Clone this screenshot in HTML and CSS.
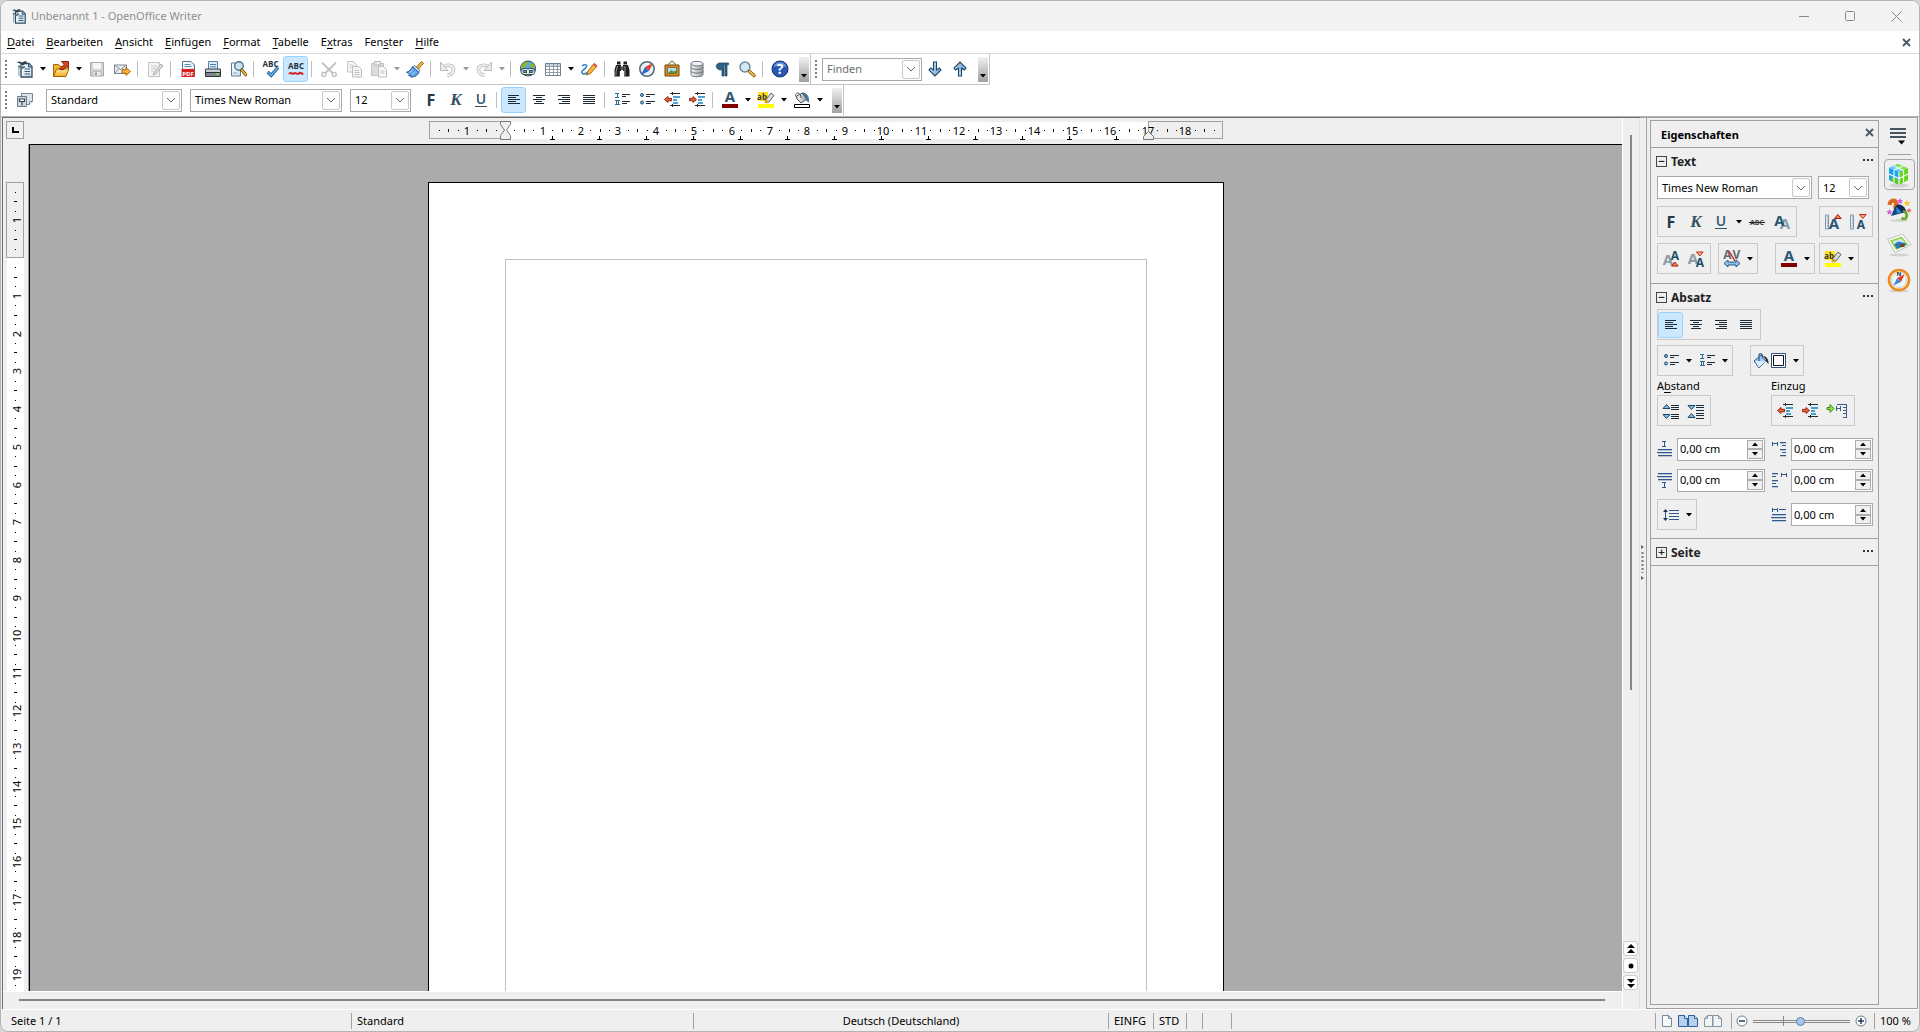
FILE: index.html
```html
<!DOCTYPE html>
<html lang="de">
<head>
<meta charset="utf-8">
<title>Unbenannt 1 - OpenOffice Writer</title>
<link rel="stylesheet" href="styles.css">
</head>
<body>
<svg class="defs" aria-hidden="true">
  <defs>
    <linearGradient id="g-blue" x1="0" y1="0" x2="1" y2="1"><stop offset="0" stop-color="#e4f2fd"/><stop offset="1" stop-color="#5f9fd6"/></linearGradient>
    <linearGradient id="g-grey" x1="0" y1="0" x2="1" y2="0"><stop offset="0" stop-color="#fafafa"/><stop offset="1" stop-color="#9a9a9a"/></linearGradient>
    <linearGradient id="g-gold" x1="0" y1="0" x2="0" y2="1"><stop offset="0" stop-color="#ffe9a0"/><stop offset="1" stop-color="#f5a81c"/></linearGradient>
    <linearGradient id="g-paper" x1="0" y1="0" x2="1" y2="1"><stop offset="0" stop-color="#fff"/><stop offset="1" stop-color="#cfdeea"/></linearGradient>
  </defs>
</svg>
<svg class="symbols" aria-hidden="true">
  <symbol id="i-writer" viewBox="0 0 18 18"><path d="M5 3.500h8l3 3v10.500H5z" fill="url(#g-paper)" stroke="#2c4c63" stroke-width="1.300"/><path d="M12.500 3.500v3.500H16" fill="#9ab4c6" stroke="#2c4c63"/><path d="M8.500 9h5.500M8.500 11.500h5.500M8.500 14h5.500" stroke="#2c5f86" stroke-width="1.200"/><path d="M1 2.500c2-1.500 4-1 5 .5 1.500-2 3.500-2 5.500-1C9.500 2.500 9 5 6.500 5.500 5.500 3.500 3 3 1 2.500z" fill="#2b3f4f"/><path d="M2 6.500c1.500-.5 3 0 3.500 1.200C6.500 6.300 8 6.200 9.300 7 8 7.300 7 8.800 5.500 8.800 4.800 7.400 3.500 6.800 2 6.500zM3 5v11" fill="#3d5668" stroke="#5b7688" stroke-width=".800"/></symbol>
  <symbol id="i-open" viewBox="0 0 18 18"><path d="M1.500 4.500h5l1.500 2h6v9.500h-12.500z" fill="#f6b62c" stroke="#a8660b"/><path d="M1.500 16.500L4.500 9h12.300l-2.800 7.500z" fill="url(#g-gold)" stroke="#a8660b"/><path d="M7.500 9l4.500-4.500-2.500-3h7v7l-2.200-2.200L11 10z" fill="#d8461b" stroke="#7e1d06" stroke-width=".900"/></symbol>
  <symbol id="i-save" viewBox="0 0 18 18"><path d="M2.500 2.500h13v13.500h-13z" fill="#d2d2d2" stroke="#a9a9a9"/><path d="M5 3h8v6H5z" fill="#f6f6f6"/><path d="M5 11.500h8v4.500H5z" fill="#ebebeb" stroke="#b4b4b4" stroke-width=".800"/><path d="M7 12.500h2v2.500H7z" fill="#999"/></symbol>
  <symbol id="i-mail" viewBox="0 0 18 18"><path d="M1.500 5h12v8.500h-12z" fill="#e9edf1" stroke="#7d868e"/><path d="M1.500 5l6 4.500 6-4.500M1.500 13.500l4.500-5M13.500 13l-4-4.500" fill="none" stroke="#7d868e" stroke-width=".900"/><path d="M9 9.800h4V7.500l4.500 4-4.500 4v-2.300H9z" fill="#ffb43a" stroke="#a45b06" stroke-width=".900"/></symbol>
  <symbol id="i-edit" viewBox="0 0 18 18"><path d="M2.500 2.500h11v14h-11z" fill="#f4f4f4" stroke="#c3c3c3"/><path d="M5 6h6M5 8.500h5M5 11h3" stroke="#ccc"/><path d="M8 12.500L15 4l2 1.800-7.300 8.200-2.500 1z" fill="#d7d7d7" stroke="#b0b0b0"/></symbol>
  <symbol id="i-pdf" viewBox="0 0 18 18"><path d="M3.500 1.500h8.500l3.500 3.500v11.500h-12z" fill="url(#g-paper)" stroke="#50748f"/><path d="M5.500 4.500h6M5.500 6.500h7" stroke="#5f8bab"/><path d="M2.500 9h13v8h-13z" fill="#d9201f"/><text x="9" y="15.500" text-anchor="middle" class="t-pdf">PDF</text></symbol>
  <symbol id="i-print" viewBox="0 0 18 18"><path d="M4.500 1.500h9v8h-9z" fill="#dcebf7" stroke="#5c7f9b"/><path d="M6 4.500h6M6 6.800h6" stroke="#4583b5"/><path d="M1.500 9h15v4.500h-15z" fill="#c8ced2" stroke="#3a4248"/><path d="M1.500 12.500h15v4h-15z" fill="#7d868c" stroke="#2b3237"/><path d="M12 14h3" stroke="#7fe037" stroke-width="1.500"/></symbol>
  <symbol id="i-preview" viewBox="0 0 18 18"><path d="M2.500 3h9v13h-9z" fill="url(#g-paper)" stroke="#5a7c94"/><path d="M4 13h4" stroke="#7ea4c0"/><circle cx="10" cy="6" r="4.300" fill="#c9e2f5" fill-opacity=".9" stroke="#50788f" stroke-width="1.400"/><path d="M12.800 10l4 4.800" stroke="#7a4a08" stroke-width="3.200" stroke-linecap="round"/><path d="M12.800 10l4 4.800" stroke="#f2b944" stroke-width="1.600" stroke-linecap="round"/></symbol>
  <symbol id="i-spell" viewBox="0 0 18 18"><text x="8.500" y="7" text-anchor="middle" class="t-abc">ABC</text><path d="M5.500 12l3.700 3.300L16 7.500" fill="none" stroke="#1e5f97" stroke-width="3.300"/><path d="M5.500 12l3.700 3.300L16 7.500" fill="none" stroke="#6cb5ec" stroke-width="1.500"/></symbol>
  <symbol id="i-autospell" viewBox="0 0 18 18"><text x="9" y="9" text-anchor="middle" class="t-abc">ABC</text><path d="M2 14c1.800-3 3.400 1 5-.5 1.600-2 3.200 2 4.800 0 1.600-2 3 1 4.600 0" fill="none" stroke="#d81e1e" stroke-width="2"/></symbol>
  <symbol id="i-cut" viewBox="0 0 18 18"><path d="M2 2.500l11 11M16 2.500L5 13.500" stroke="#c2c2c2" stroke-width="1.800"/><circle cx="3.800" cy="14.500" r="2" fill="none" stroke="#c4c4c4" stroke-width="1.500"/><circle cx="14.200" cy="14.500" r="2" fill="none" stroke="#c4c4c4" stroke-width="1.500"/></symbol>
  <symbol id="i-copy" viewBox="0 0 18 18"><path d="M2.500 1.500h6l3 3v7.500h-9z" fill="#f5f5f5" stroke="#c4c4c4"/><path d="M4.500 5h4M4.500 7.500h4" stroke="#ccc"/><path d="M7.500 6.500h6l3 3v7.500h-9z" fill="#f5f5f5" stroke="#bdbdbd"/><path d="M9.500 10.500h4.500M9.500 12.500h5M9.500 14.500h5" stroke="#c4c4c4"/></symbol>
  <symbol id="i-paste" viewBox="0 0 18 18"><path d="M1.500 3.500h12v12h-12z" fill="#dcdcdc" stroke="#c4c4c4"/><path d="M4.500 1.500h6v3.500h-6z" fill="#efefef" stroke="#b8b8b8"/><path d="M8.500 6.500h5l3 3v7.500h-8z" fill="#f8f8f8" stroke="#bdbdbd"/><path d="M10.500 11h4M10.500 13h4" stroke="#c8c8c8"/></symbol>
  <symbol id="i-brush" viewBox="0 0 18 18"><path d="M10.500 7L15.500 1.500l2 1.700L12.500 9z" fill="#f0bb3d" stroke="#8b5a0c" stroke-width=".900"/><path d="M8.500 5.500l5.500 5-1.500 2-5.500-5z" fill="#dfe4e8" stroke="#55656f" stroke-width=".800"/><path d="M6.500 6.500l6.500 6c-1.500 3.500-6 5-8.500 4.500l1-1.300-3-.2 1.300-1.500L.5 12.300c2.500-.8 4.500-2.800 6-5.800z" fill="#5b9fe6" stroke="#1d4f91" stroke-width=".900"/><path d="M7 9.500l-4 4M9.500 11.500l-4 3.500" stroke="#b8dcfa"/></symbol>
  <symbol id="i-undo" viewBox="0 0 18 18"><path d="M5 6.500c5-3 10-.5 9.500 4C14 13.500 11 15.500 8 15" fill="none" stroke="#bcbcbc" stroke-width="3.500"/><path d="M5 6.500c5-3 10-.5 9.500 4C14 13.500 11 15.500 8 15" fill="none" stroke="#f0f0f0" stroke-width="1.900"/><path d="M1.500 2v8.500H9z" fill="#eaeaea" stroke="#bcbcbc"/></symbol>
  <symbol id="i-redo" viewBox="0 0 18 18"><use href="#i-undo" transform="matrix(-1 0 0 1 18 0)"/></symbol>
  <symbol id="i-globe" viewBox="0 0 18 18"><circle cx="9" cy="8.500" r="7.500" fill="#5aa9e0" stroke="#254c66"/><path d="M2.500 5.500C5 1.500 7 1.500 9 2l-1 3-2.500 1.500L5 9 2 8zM11 2.500c3 .5 5 3 5 6l-3-1-2.500-2zM5 13l3-2 3 2-2 3z" fill="#93b52a"/><rect x="3" y="9.500" width="6.500" height="4" rx="2" fill="none" stroke="#26343c" stroke-width="2.600"/><rect x="8.500" y="9.500" width="6.500" height="4" rx="2" fill="none" stroke="#26343c" stroke-width="2.600"/><rect x="3" y="9.500" width="6.500" height="4" rx="2" fill="none" stroke="#e8eef0" stroke-width="1.200"/><rect x="8.500" y="9.500" width="6.500" height="4" rx="2" fill="none" stroke="#e8eef0" stroke-width="1.200"/></symbol>
  <symbol id="i-table" viewBox="0 0 18 18"><path d="M1.500 3.500h15v12h-15z" fill="#fff" stroke="#6d7f8d"/><path d="M2 4h14v2.500H2z" fill="#c8d5df"/><path d="M1.500 6.500h15M1.500 9.500h15M1.500 12.500h15M5.500 3.500v12M9.500 3.500v12M13.500 3.500v12" stroke="#8899a6" stroke-width=".900"/></symbol>
  <symbol id="i-draw" viewBox="0 0 18 18"><path d="M2 6c3-2.500 6-1 4 1.500-2 2.500-6 3.500-3.500 6 1.500 1 3.500 0 5-1" fill="none" stroke="#3585c6" stroke-width="1.600"/><path d="M8 11l6-7.500 3 2.500-6.500 7.500-4 1.500z" fill="#f6b93b" stroke="#8d5b0d" stroke-width=".900"/><path d="M13 4.700l1.200-1.700 3.200 2.500-1.400 1.700z" fill="#dc5045"/></symbol>
  <symbol id="i-binoc" viewBox="0 0 18 18"><path d="M4 1.500h3.500v3H4zM10.500 1.500H14v3h-3.500zM3 5h5v6H6.800v5.500H1.500V10zM15 5h-5v6h1.200v5.500h5.300V10z" fill="#1e1e1e"/><path d="M7.500 6.500h3V10h-3z" fill="#555"/><path d="M4.500 6L3 12v3.500M12 6v9.500" stroke="#9a9a9a"/></symbol>
  <symbol id="i-compass" viewBox="0 0 18 18"><circle cx="9" cy="9" r="7.200" fill="#e7f1f9" stroke="#586d7a" stroke-width="1.600"/><path d="M15 3l-4 8-4-4z" fill="#e3402b"/><path d="M3 15l8-4-4-4z" fill="#2a66c4"/></symbol>
  <symbol id="i-gallery" viewBox="0 0 18 18"><path d="M5 4.500L9 1l4 3.500" fill="none" stroke="#7b5015"/><path d="M2 5h14v11H2z" fill="#d98e25" stroke="#6f420b"/><path d="M4.500 7.500h9v6h-9z" fill="#aee0fb" stroke="#6f420b" stroke-width=".700"/><path d="M5 13l3.500-3 2 1.500 3-1V13z" fill="#4c9a2a"/></symbol>
  <symbol id="i-db" viewBox="0 0 18 18"><path d="M3 3.500v11c0 3 12 3 12 0v-11z" fill="url(#g-grey)" stroke="#6b7680"/><ellipse cx="9" cy="3.700" rx="6" ry="2.300" fill="#eef2f5" stroke="#6b7680"/><path d="M3 7.300c0 2.800 12 2.800 12 0M3 11c0 2.800 12 2.800 12 0" fill="none" stroke="#6b7680"/></symbol>
  <symbol id="i-para" viewBox="0 0 18 18"><path d="M15.500 3v1.800h-1.500V16h-2V4.800h-1V16H9v-6C1.800 10.500 1.800 3 7 3z" fill="#2f6488" stroke="#1b3e58" stroke-width=".700"/></symbol>
  <symbol id="i-zoom" viewBox="0 0 18 18"><circle cx="7" cy="7" r="5" fill="#d2e8f8" stroke="#71899a" stroke-width="1.500"/><path d="M11.500 11.500l4.500 4" stroke="#7a4a08" stroke-width="3.200" stroke-linecap="round"/><path d="M11.500 11.500l4.500 4" stroke="#f7c145" stroke-width="1.800" stroke-linecap="round"/></symbol>
  <symbol id="i-help" viewBox="0 0 18 18"><circle cx="9" cy="9" r="8" fill="#2857b8" stroke="#1a3470"/><path d="M2.500 7a6.800 6.800 0 0 1 13 0c-4-2-9-2-13 0z" fill="#6d98e0"/><text x="9" y="14" text-anchor="middle" class="t-help">?</text></symbol>
  <symbol id="i-down" viewBox="0 0 18 18"><path d="M7.500 2h3v8l3-2 1.500 2L9 16 3 10l1.500-2 3 2z" fill="url(#g-blue)" stroke="#1c4565" stroke-width="1.100"/></symbol>
  <symbol id="i-up" viewBox="0 0 18 18"><use href="#i-down" transform="matrix(1 0 0 -1 0 18)"/></symbol>
  <symbol id="i-styles" viewBox="0 0 18 18"><path d="M5.500 2.500h11v8l-3 3h-8z" fill="#dbe5ec" stroke="#75899a"/><path d="M16.500 10.500h-3v3" fill="#fff" stroke="#75899a"/><path d="M1.500 5.500h9v10h-9z" fill="#cfd8df" stroke="#6c7f8e"/><path d="M3.500 8h5v2.500h-5zM6 10.500v4" fill="#fff" stroke="#33444f" stroke-width="1.200"/></symbol>
  <symbol id="i-bold" viewBox="0 0 18 18"><text x="9" y="15" text-anchor="middle" class="t-bold">F</text></symbol>
  <symbol id="i-italic" viewBox="0 0 18 18"><text x="9" y="14" text-anchor="middle" class="t-italic">K</text></symbol>
  <symbol id="i-underline" viewBox="0 0 18 18"><text x="9" y="13" text-anchor="middle" class="t-under">U</text><path d="M3 15.500h12" stroke="#33546b"/></symbol>
  <symbol id="i-left" viewBox="0 0 18 18"><path d="M3 4.500h11M3 6.500h8M3 8.500h12M3 10.500h8M3 12.500h12" stroke="#1d2b36" shape-rendering="crispEdges"/></symbol>
  <symbol id="i-center" viewBox="0 0 18 18"><path d="M3 4.500h12M6 6.500h6M3 8.500h12M6 10.500h6M4 12.500h10" stroke="#1d2b36" shape-rendering="crispEdges"/></symbol>
  <symbol id="i-right" viewBox="0 0 18 18"><path d="M3 4.500h12M7 6.500h8M3 8.500h12M7 10.500h8M4 12.500h11" stroke="#1d2b36" shape-rendering="crispEdges"/></symbol>
  <symbol id="i-just" viewBox="0 0 18 18"><path d="M3 4.500h12M3 6.500h12M3 8.500h12M3 10.500h12M3 12.500h12" stroke="#1d2b36" shape-rendering="crispEdges"/></symbol>
  <symbol id="i-num" viewBox="0 0 18 18"><path d="M2 2.500h4M4 2v5M2 6.500h4M2 9.500h5M3 9v5M5 9v5M2 13.500h5" stroke="#2e6c95" shape-rendering="crispEdges"/><path d="M9 3.500h8M9 5.500h4M9 10.500h8M9 12.500h5" stroke="#1d2b36" shape-rendering="crispEdges"/></symbol>
  <symbol id="i-bul" viewBox="0 0 18 18"><circle cx="4" cy="4" r="1.500" fill="#8fc3e8" stroke="#1b4a6c"/><circle cx="4" cy="11.500" r="1.500" fill="#8fc3e8" stroke="#1b4a6c"/><path d="M8 3.500h9M8 5.500h4M8 10.500h9M8 12.500h5" stroke="#1d2b36" shape-rendering="crispEdges"/></symbol>
  <symbol id="i-outdent" viewBox="0 0 18 18"><path d="M7 2.500h2M10 2.500h7M7 14.500h2M10 14.500h7M9.500 1v3M9.500 13v3" stroke="#1d2b36" shape-rendering="crispEdges"/><path d="M10 6h7M10 9h4M10 12h5" stroke="#1583c8" stroke-width="1.600"/><path d="M1.500 8.500l3.500-3v1.800h3.500v2.500H5v1.700z" fill="#e8643a" stroke="#8c1c08" stroke-width=".900"/></symbol>
  <symbol id="i-indent" viewBox="0 0 18 18"><path d="M7 2.500h2M10 2.500h7M7 14.500h2M10 14.500h7M9.500 1v3M9.500 13v3" stroke="#1d2b36" shape-rendering="crispEdges"/><path d="M10 6h7M10 9h4M10 12h5" stroke="#1583c8" stroke-width="1.600"/><path d="M8.500 8.500L5 5.500v1.800H1.500v2.500H5v1.700z" fill="#e8643a" stroke="#8c1c08" stroke-width=".900"/></symbol>
  <symbol id="i-color" viewBox="0 0 18 18"><text x="9" y="11" text-anchor="middle" class="t-color">A</text><path d="M1 13h16v4H1z" fill="#800000"/></symbol>
  <symbol id="i-high" viewBox="0 0 18 18"><path d="M1 1h10v9H1z" fill="#ffe11b"/><text x="5" y="9" text-anchor="middle" class="t-ab">ab</text><path d="M9 8.500L14 2l3 2.500-5 6.500-3.500.5z" fill="#d8dde0" stroke="#4c555b" stroke-width=".900"/><path d="M7 11.500l2.500-3 2.500 2-2 2z" fill="#e8a21c"/><path d="M1 13h16v4H1z" fill="#ff0"/></symbol>
  <symbol id="i-bucket" viewBox="0 0 18 18"><path d="M3.500 5l6-3 4.500 6-6 4-4-4z" fill="url(#g-grey)" stroke="#48545c"/><path d="M9.500 2c4 0 6.500 3 6 9-1.500-.5-2-2.500-2.500-4z" fill="#3d83b5" stroke="#234e6e" stroke-width=".700"/><path d="M3.500 6C1.500 5 3 1.500 5 2s3 2.500 3 5" fill="none" stroke="#48545c"/><path d="M1.500 13.500h15v3h-15z" fill="#fff" stroke="#000"/></symbol>
  <symbol id="i-fill" viewBox="0 0 18 18"><path d="M2 9l7-6 5 6-7 7z" fill="#9cc3ea" stroke="#2f5b8d"/><path d="M3 9h11l-7 6.500z" fill="#dcebf9"/><path d="M7 9V3.500c0-3 4-2 3.500 1V6" fill="none" stroke="#2f5b8d" stroke-width="1.200"/><path d="M11 4c3 0 6 3 5.500 8C15 11 14 9 13.500 7z" fill="#26282d"/></symbol>
  <symbol id="i-box" viewBox="0 0 16 16"><path d="M.5.500h14v14H.5z" fill="#fff" stroke="#2f4f86"/><path d="M2.500 2.500h10v10h-10z" fill="#fff" stroke="#111"/></symbol>
  <symbol id="i-strike" viewBox="0 0 18 18"><text x="9" y="12" text-anchor="middle" class="t-strike">ABC</text><path d="M1 9.500h16" stroke="#222"/></symbol>
  <symbol id="i-shadow" viewBox="0 0 18 18"><text x="12" y="16" text-anchor="middle" class="t-color t-grey">A</text><text x="6.500" y="13" text-anchor="middle" class="t-color">A</text></symbol>
  <symbol id="i-grow" viewBox="0 0 18 18"><path d="M1.500 2v14h3V2zM3 4h1.500M3 7h1.500M3 10h1.500M3 13h1.500" fill="#dfe8ee" stroke="#7690a3" stroke-width=".900"/><text x="10" y="16" text-anchor="middle" class="t-color">A</text><path d="M10.500 5.500l3.300-4 3.300 4z" fill="#f28a50" stroke="#a31a06"/></symbol>
  <symbol id="i-shrink" viewBox="0 0 18 18"><path d="M1.500 2v14h3V2zM3 4h1.500M3 7h1.500M3 10h1.500M3 13h1.500" fill="#dfe8ee" stroke="#7690a3" stroke-width=".900"/><text x="12" y="16" text-anchor="middle" class="t-a">A</text><path d="M10.500 1.500h6.600l-3.300 4z" fill="#f8b08c" stroke="#c3240b"/></symbol>
  <symbol id="i-sup" viewBox="0 0 18 18"><text x="6" y="15" text-anchor="middle" class="t-color t-grey">A</text><text x="13" y="10" text-anchor="middle" class="t-a">A</text><path d="M9.500 16l3.300-4 3.300 4z" fill="#f28a50" stroke="#a31a06"/></symbol>
  <symbol id="i-sub" viewBox="0 0 18 18"><text x="6" y="14" text-anchor="middle" class="t-color t-grey">A</text><text x="13" y="17" text-anchor="middle" class="t-a">A</text><path d="M9.500 2h6.600l-3.300 4z" fill="#f8b08c" stroke="#c3240b"/></symbol>
  <symbol id="i-kern" viewBox="0 0 18 18"><text x="4.500" y="9" text-anchor="middle" class="t-a t-slate">A</text><text x="13.500" y="9" text-anchor="middle" class="t-a t-slate">V</text><path d="M6 1l6 10" stroke="#d81e1e" stroke-width="1.400"/><path d="M1 13.500l4-3.500v2h8v-2l4 3.500-4 3.500v-2H5v2z" fill="#8dc0e8" stroke="#1d4f80" stroke-width=".900"/></symbol>
  <symbol id="i-spinc" viewBox="0 0 18 18"><path d="M9 3.500h8M9 5.500h8M9 7.500h8M9 12.500h8M9 14.500h8M9 16.500h8" stroke="#1d2b36" shape-rendering="crispEdges"/><path d="M1 6.500l3.500-4L8 6.500z M1 12.500h7l-3.500 4z" fill="#7fb9e6" stroke="#1b4a6c"/></symbol>
  <symbol id="i-spdec" viewBox="0 0 18 18"><path d="M9 3.500h8M9 5.500h8M9 8.500h8M9 11.500h8M9 13.500h8M9 16.500h8" stroke="#1d2b36" shape-rendering="crispEdges"/><path d="M1 3.500h7l-3.500 4zM1 15.500l3.500-4 3.500 4z" fill="#7fb9e6" stroke="#1b4a6c"/></symbol>
  <symbol id="i-hang" viewBox="0 0 22 18"><path d="M1 5.500h3V2.500l4 4-4 4V7.500H1z" fill="#9be04b" stroke="#3c8a12"/><path d="M10.500 4v5M10 6.500h5M14.500 4v5M11 2.500h10M20.500 3v13M17 5.500h3M17 8.500h3M17 11.500h3M17 15.500h3" stroke="#3a5c8e" shape-rendering="crispEdges"/></symbol>
  <symbol id="i-above" viewBox="0 0 16 18"><path d="M5 1.500h4M7 1v6M5 6.500h4M1 9.500h14M0 12.500h15M1 15.500h14" stroke="#31578c" shape-rendering="crispEdges"/><path d="M1 10.500h14M1 13.500h14M1 16.500h14" stroke="#b8c6da"/></symbol>
  <symbol id="i-below" viewBox="0 0 16 18"><path d="M5 11.500h4M7 11v6M5 16.500h4M1 2.500h14M0 5.500h15M1 8.500h14" stroke="#31578c" shape-rendering="crispEdges"/><path d="M1 3.500h14M1 6.500h14M1 9.500h14" stroke="#b8c6da"/></symbol>
  <symbol id="i-before" viewBox="0 0 16 18"><path d="M1 2v4M1 3.500h5M6 2v4M9 2.500h6M11 5.500h4M9 9.500h6M11 12.500h4M9 15.500h6" stroke="#31578c" shape-rendering="crispEdges"/><path d="M9 3.500h6M9 10.500h6M9 16.500h6" stroke="#b8c6da"/></symbol>
  <symbol id="i-after" viewBox="0 0 16 18"><path d="M10 2v4M10 3.500h5M15 2v4M1 2.500h6M1 5.500h4M1 9.500h6M1 12.500h4M1 15.500h6" stroke="#31578c" shape-rendering="crispEdges"/><path d="M1 3.500h6M1 10.500h6M1 16.500h6" stroke="#b8c6da"/></symbol>
  <symbol id="i-first" viewBox="0 0 16 18"><path d="M1 2v4M1 3.500h5M6 2v4M8 3.500h7M1 8.500h14M0 11.500h15M1 14.500h14" stroke="#31578c" shape-rendering="crispEdges"/><path d="M1 9.500h14M1 12.500h14M1 15.500h14" stroke="#b8c6da"/></symbol>
  <symbol id="i-line" viewBox="0 0 18 18"><path d="M3.500 5v8M7 4.500h10M7 7.500h10M7 10.500h10M7 13.500h10" stroke="#31578c"/><path d="M1 6l2.500-3L6 6zM1 12l2.500 3L6 12z" fill="#1f3350"/></symbol>
  <symbol id="i-caret" viewBox="0 0 6 4"><path d="M0 0h6L3 3.500z"/></symbol>
  <symbol id="i-chev" viewBox="0 0 10 6"><path d="M1 1l4 4 4-4" fill="none" stroke="#6a6a6a"/></symbol>
  <symbol id="i-x" viewBox="0 0 9 9"><path d="M1 1l7 7M8 1L1 8" stroke="#4a5763" stroke-width="1.800"/></symbol>
  <symbol id="i-cube" viewBox="0 0 26 26"><ellipse cx="13" cy="23.500" rx="10" ry="2" fill="#d2d2d2"/><path d="M3 6l9-4 2 1v7l-1 13-10-5z" fill="#1ba3ea"/><path d="M13 3l9 3.500V18l-9 5z" fill="#5fc81e"/><path d="M3 6l9-4 10 4.500-9 3.500z" fill="#6fcdf8"/><path d="M13 10l9-3.500V18l-9 5z" fill="#67d41c"/><path d="M12.500 2l9.500 4.500-4.500 2L8 4z" fill="#8be04a"/><path d="M5 15l8 3v5l-8-4z" fill="#5ccb2a"/><path d="M3 12l10 4.500L22 12M8 8.500v12M17.500 8.500v12M13 10v13M8 4l9.500 4.500M17 4L8 8" stroke="#eefaff" stroke-width="1.200" fill="none"/></symbol>
  <symbol id="i-magic" viewBox="0 0 26 26"><ellipse cx="13" cy="23.500" rx="9" ry="1.500" fill="#d2d2d2"/><path d="M3.500 8C4 3 9 2.500 10 5.500c.7 2-1.500 3.500-.5 6" fill="none" stroke="#dd6a1c" stroke-width="4"/><path d="M5 19L9.500 9 20 15z" fill="#14467f"/><path d="M10 10l8 4.500-7 2z" fill="#2d8fe0"/><path d="M9.500 9c2-3 9-2 11 6l-4 1z" fill="#0d2c52"/><path d="M17 14c3 1 5 4 3 7-1 1.500-3 1-4.500 0" fill="none" stroke="#6cab2b" stroke-width="2.800"/><path d="M14 1l1 2 2 .2-1.500 1.500.5 2.300-2-1-2 1 .5-2.300L11 3.200l2-.2zM3.500 12l1 2 2 .2L5 15.700l.5 2-2-1-2 1 .5-2L.5 14.200l2-.2z" fill="#d65fe0"/><path d="M21 3l1 2 2.500.2-2 1.700.6 2.300L21 8l-2 1.200.6-2.300-2-1.700L20 5z" fill="#f7c52c"/><path d="M23 11l.8 1.500 1.700.2-1.200 1.200.3 1.800-1.600-.9-1.600.9.300-1.800-1.200-1.200 1.700-.2z" fill="#f26060"/></symbol>
  <symbol id="i-photo" viewBox="0 0 26 26"><ellipse cx="13" cy="23" rx="10" ry="1.500" fill="#d2d2d2"/><path d="M1.500 7.500L16.500 2l8.500 10.500L9 20.500z" fill="#fff" stroke="#b6c0c0"/><path d="M4 8.500L15.500 4.500l7 8L10 18z" fill="#9bd23c"/><path d="M6.500 9.500l8.500-3 5.500 5.500-9.500 4z" fill="#c8ecfb"/><path d="M8 12.500l4-3 7 1.500 1.500 1.500L11 17z" fill="#2f79b8"/><path d="M14.500 12h4v3h-4z" fill="#79431d"/></symbol>
  <symbol id="i-nav" viewBox="0 0 26 26"><ellipse cx="13" cy="24" rx="10" ry="1.500" fill="#d2d2d2"/><circle cx="13" cy="13" r="10" fill="#f4f7f8" stroke="#ef8a1b" stroke-width="2.600"/><circle cx="13" cy="13" r="7.500" fill="none" stroke="#c9d2d6"/><text x="13" y="8.500" text-anchor="middle" class="t-n">N</text><path d="M18.500 7.500L15 15l-4-4z" fill="#e33a26"/><path d="M7.500 18.500L15 15l-4-4z" fill="#3f8fe0"/></symbol>
  <symbol id="i-page1" viewBox="0 0 10 12"><path d="M.5.500h6l3 3v8h-9z" fill="#f7fafc" stroke="#73899b"/><path d="M6.500.500v3h3" fill="none" stroke="#73899b"/></symbol>
  <symbol id="i-page2" viewBox="0 0 20 12"><path d="M.5.500h6l3 3v8h-9zM10.500.500h6l3 3v8h-9z" fill="#b7d0ef" stroke="#2d5f9c"/><path d="M6.500.500v3h3M16.500.500v3h3" fill="#fff" stroke="#2d5f9c"/></symbol>
  <symbol id="i-book" viewBox="0 0 18 12"><path d="M3.500.500h5v11h-8v-8zM9 .5h5.500l3 3v8H9z" fill="#f2f5f7" stroke="#8496a4"/><path d="M3.500.500v3h-3M14.500.500v3h3" fill="none" stroke="#8496a4"/></symbol>
</svg>

<div class="window">
  <header class="titlebar">
    <svg class="ic16"><use href="#i-writer"/></svg>
    <h1>Unbenannt 1 - OpenOffice Writer</h1>
    <button class="winbtn" aria-label="Minimieren"><svg width="11" height="11"><path d="M0 5.500h10" stroke="#8a8a8a"/></svg></button>
    <button class="winbtn" aria-label="Maximieren"><svg width="11" height="11"><rect x=".5" y=".5" width="9" height="9" rx="1" fill="none" stroke="#8a8a8a"/></svg></button>
    <button class="winbtn" aria-label="Schließen"><svg width="11" height="11"><path d="M.5.500l10 10M10.500.500l-10 10" stroke="#8a8a8a"/></svg></button>
  </header>

  <nav class="menubar">
    <button><u>D</u>atei</button><button><u>B</u>earbeiten</button><button><u>A</u>nsicht</button><button><u>E</u>infügen</button><button><u>F</u>ormat</button><button><u>T</u>abelle</button><button>E<u>x</u>tras</button><button>Fen<u>s</u>ter</button><button><u>H</u>ilfe</button>
    <button class="docclose" aria-label="Dokument schließen"><svg width="9" height="9"><use href="#i-x"/></svg></button>
  </nav>

  <div class="bars">
    <div class="barrow">
      <div class="bar" role="toolbar" aria-label="Standard">
        <i class="grip"></i>
        <button class="tb" aria-label="Neu"><svg><use href="#i-writer"/></svg></button><button class="dd" aria-label="Neu Liste"><svg><use href="#i-caret"/></svg></button>
        <button class="tb" aria-label="Öffnen"><svg><use href="#i-open"/></svg></button><button class="dd" aria-label="Öffnen Liste"><svg><use href="#i-caret"/></svg></button>
        <button class="tb" aria-label="Speichern"><svg><use href="#i-save"/></svg></button>
        <button class="tb" aria-label="E-Mail"><svg><use href="#i-mail"/></svg></button>
        <i class="sep"></i>
        <button class="tb" aria-label="Bearbeiten"><svg><use href="#i-edit"/></svg></button>
        <i class="sep"></i>
        <button class="tb" aria-label="PDF"><svg><use href="#i-pdf"/></svg></button>
        <button class="tb" aria-label="Drucken"><svg><use href="#i-print"/></svg></button>
        <button class="tb" aria-label="Seitenansicht"><svg><use href="#i-preview"/></svg></button>
        <i class="sep"></i>
        <button class="tb" aria-label="Rechtschreibung"><svg><use href="#i-spell"/></svg></button>
        <button class="tb on" aria-label="Automatische Rechtschreibprüfung" aria-pressed="true"><svg><use href="#i-autospell"/></svg></button>
        <i class="sep"></i>
        <button class="tb" aria-label="Ausschneiden"><svg><use href="#i-cut"/></svg></button>
        <button class="tb" aria-label="Kopieren"><svg><use href="#i-copy"/></svg></button>
        <button class="tb" aria-label="Einfügen"><svg><use href="#i-paste"/></svg></button><button class="dd off" aria-label="Einfügen Liste"><svg><use href="#i-caret"/></svg></button>
        <button class="tb" aria-label="Format übertragen"><svg><use href="#i-brush"/></svg></button>
        <i class="sep"></i>
        <button class="tb" aria-label="Rückgängig"><svg><use href="#i-undo"/></svg></button><button class="dd off" aria-label="Rückgängig Liste"><svg><use href="#i-caret"/></svg></button>
        <button class="tb" aria-label="Wiederherstellen"><svg><use href="#i-redo"/></svg></button><button class="dd off" aria-label="Wiederherstellen Liste"><svg><use href="#i-caret"/></svg></button>
        <i class="sep"></i>
        <button class="tb" aria-label="Hyperlink"><svg><use href="#i-globe"/></svg></button>
        <button class="tb" aria-label="Tabelle"><svg><use href="#i-table"/></svg></button><button class="dd" aria-label="Tabelle Liste"><svg><use href="#i-caret"/></svg></button>
        <button class="tb" aria-label="Zeichnen"><svg><use href="#i-draw"/></svg></button>
        <i class="sep"></i>
        <button class="tb" aria-label="Suchen"><svg><use href="#i-binoc"/></svg></button>
        <button class="tb" aria-label="Navigator"><svg><use href="#i-compass"/></svg></button>
        <button class="tb" aria-label="Gallery"><svg><use href="#i-gallery"/></svg></button>
        <button class="tb" aria-label="Datenquellen"><svg><use href="#i-db"/></svg></button>
        <button class="tb" aria-label="Steuerzeichen"><svg><use href="#i-para"/></svg></button>
        <button class="tb" aria-label="Maßstab"><svg><use href="#i-zoom"/></svg></button>
        <i class="sep"></i>
        <button class="tb" aria-label="Hilfe"><svg><use href="#i-help"/></svg></button>
        <button class="more" aria-label="Weitere"><svg><use href="#i-caret"/></svg></button>
      </div>
      <div class="bar find" role="toolbar" aria-label="Suchen">
        <i class="grip"></i>
        <div class="combo w100"><input type="text" placeholder="Finden" aria-label="Finden"><button class="chev" aria-label="Suchliste"><svg><use href="#i-chev"/></svg></button></div>
        <button class="tb" aria-label="Weitersuchen"><svg><use href="#i-down"/></svg></button>
        <button class="tb" aria-label="Rückwärts suchen"><svg><use href="#i-up"/></svg></button>
        <button class="more" aria-label="Weitere"><svg><use href="#i-caret"/></svg></button>
      </div>
    </div>
    <div class="barrow">
      <div class="bar format" role="toolbar" aria-label="Format">
        <i class="grip"></i>
        <button class="tb" aria-label="Formatvorlagen"><svg><use href="#i-styles"/></svg></button>
        <div class="combos">
          <div class="combo w136"><select aria-label="Vorlage"><option>Standard</option></select><span class="chev"><svg><use href="#i-chev"/></svg></span></div>
          <div class="combo w152"><select aria-label="Schriftart"><option>Times New Roman</option></select><span class="chev"><svg><use href="#i-chev"/></svg></span></div>
          <div class="combo w61"><select aria-label="Schriftgröße"><option>12</option></select><span class="chev"><svg><use href="#i-chev"/></svg></span></div>
        </div>
        <button class="tb" aria-label="Fett"><svg><use href="#i-bold"/></svg></button>
        <button class="tb" aria-label="Kursiv"><svg><use href="#i-italic"/></svg></button>
        <button class="tb" aria-label="Unterstrichen"><svg><use href="#i-underline"/></svg></button>
        <i class="sep"></i>
        <button class="tb on" aria-label="Linksbündig" aria-pressed="true"><svg><use href="#i-left"/></svg></button>
        <button class="tb" aria-label="Zentriert"><svg><use href="#i-center"/></svg></button>
        <button class="tb" aria-label="Rechtsbündig"><svg><use href="#i-right"/></svg></button>
        <button class="tb" aria-label="Blocksatz"><svg><use href="#i-just"/></svg></button>
        <i class="sep"></i>
        <button class="tb" aria-label="Nummerierung"><svg><use href="#i-num"/></svg></button>
        <button class="tb" aria-label="Aufzählung"><svg><use href="#i-bul"/></svg></button>
        <button class="tb" aria-label="Einzug verkleinern"><svg><use href="#i-outdent"/></svg></button>
        <button class="tb" aria-label="Einzug vergrößern"><svg><use href="#i-indent"/></svg></button>
        <i class="sep"></i>
        <button class="tb" aria-label="Zeichenfarbe"><svg><use href="#i-color"/></svg></button><button class="dd" aria-label="Zeichenfarbe Liste"><svg><use href="#i-caret"/></svg></button>
        <button class="tb" aria-label="Zeichenhintergrund"><svg><use href="#i-high"/></svg></button><button class="dd" aria-label="Zeichenhintergrund Liste"><svg><use href="#i-caret"/></svg></button>
        <button class="tb" aria-label="Hintergrundfarbe"><svg><use href="#i-bucket"/></svg></button><button class="dd" aria-label="Hintergrundfarbe Liste"><svg><use href="#i-caret"/></svg></button>
        <button class="more" aria-label="Weitere"><svg><use href="#i-caret"/></svg></button>
      </div>
    </div>
  </div>

  <div class="main">
    <div class="editor">
      <button class="tabtype" aria-label="Tabulator"><svg width="7" height="6"><path d="M0 0h2v4h5v2H0z"/></svg></button>
      <div class="hruler"><svg id="hruler" width="796" height="20"></svg></div>
      <div class="vruler"><svg id="vruler" width="19" height="100%"></svg></div>
      <main class="canvas"><div class="page"><div class="textarea"></div></div></main>
      <div class="vscroll">
        <i class="vthumb"></i>
        <button aria-label="Vorherige Seite"><svg width="8" height="10"><path d="M4 0l4 4H0zM4 5l4 4H0z"/></svg></button>
        <button aria-label="Navigation"><svg width="8" height="10"><circle cx="4" cy="5" r="2.500"/></svg></button>
        <button aria-label="Nächste Seite"><svg width="8" height="10"><path d="M0 1h8L4 5zM0 6h8l-4 4z"/></svg></button>
      </div>
      <div class="hscroll"><i></i></div>
    </div>
    <div class="splitter"><svg width="3" height="38"><path d="M0 2l3 2-3 2zM0 33l3 2-3 2z" fill="#666"/><path d="M1.500 9v21" stroke="#777" stroke-width="2" stroke-dasharray="2 2"/></svg></div>

    <aside class="sidebar">
      <header class="deckhead"><h2>Eigenschaften</h2><button aria-label="Schließen"><svg width="9" height="9"><use href="#i-x"/></svg></button></header>
      <section>
        <h3><button class="fold" aria-label="Text zuklappen">−</button>Text<button class="dots" aria-label="Weitere Optionen"></button></h3>
        <div class="srow fonts">
          <div class="combo w155"><select aria-label="Schriftart"><option>Times New Roman</option></select><span class="chev"><svg><use href="#i-chev"/></svg></span></div>
          <div class="combo w51"><select aria-label="Schriftgröße"><option>12</option></select><span class="chev"><svg><use href="#i-chev"/></svg></span></div>
        </div>
        <div class="srow spread">
          <div class="grp"><button class="tb" aria-label="Fett"><svg><use href="#i-bold"/></svg></button><button class="tb" aria-label="Kursiv"><svg><use href="#i-italic"/></svg></button><button class="tb" aria-label="Unterstrichen"><svg><use href="#i-underline"/></svg></button><button class="dd" aria-label="Unterstreichung"><svg><use href="#i-caret"/></svg></button><button class="tb" aria-label="Durchgestrichen"><svg><use href="#i-strike"/></svg></button><button class="tb" aria-label="Schatten"><svg><use href="#i-shadow"/></svg></button></div>
          <div class="grp"><button class="tb" aria-label="Schrift vergrößern"><svg><use href="#i-grow"/></svg></button><button class="tb" aria-label="Schrift verkleinern"><svg><use href="#i-shrink"/></svg></button></div>
        </div>
        <div class="srow script">
          <div class="grp"><button class="tb" aria-label="Hochgestellt"><svg><use href="#i-sup"/></svg></button><button class="tb" aria-label="Tiefgestellt"><svg><use href="#i-sub"/></svg></button></div>
          <div class="grp"><button class="tb" aria-label="Laufweite"><svg><use href="#i-kern"/></svg></button><button class="dd" aria-label="Laufweite Liste"><svg><use href="#i-caret"/></svg></button></div>
          <div class="grp push"><button class="tb" aria-label="Zeichenfarbe"><svg><use href="#i-color"/></svg></button><button class="dd" aria-label="Zeichenfarbe Liste"><svg><use href="#i-caret"/></svg></button></div>
          <div class="grp tight"><button class="tb" aria-label="Hervorheben"><svg><use href="#i-high"/></svg></button><button class="dd" aria-label="Hervorheben Liste"><svg><use href="#i-caret"/></svg></button></div>
        </div>
      </section>
      <section>
        <h3><button class="fold" aria-label="Absatz zuklappen">−</button>Absatz<button class="dots" aria-label="Weitere Optionen"></button></h3>
        <div class="srow">
          <div class="grp"><button class="tb on" aria-label="Linksbündig" aria-pressed="true"><svg><use href="#i-left"/></svg></button><button class="tb" aria-label="Zentriert"><svg><use href="#i-center"/></svg></button><button class="tb" aria-label="Rechtsbündig"><svg><use href="#i-right"/></svg></button><button class="tb" aria-label="Blocksatz"><svg><use href="#i-just"/></svg></button></div>
        </div>
        <div class="srow lists">
          <div class="grp"><button class="tb" aria-label="Aufzählung"><svg><use href="#i-bul"/></svg></button><button class="dd" aria-label="Aufzählung Liste"><svg><use href="#i-caret"/></svg></button><button class="tb" aria-label="Nummerierung"><svg><use href="#i-num"/></svg></button><button class="dd" aria-label="Nummerierung Liste"><svg><use href="#i-caret"/></svg></button></div>
          <div class="grp"><button class="tb fillbtn" aria-label="Hintergrund"><svg><use href="#i-fill"/></svg><svg><use href="#i-box"/></svg></button><button class="dd" aria-label="Hintergrund Liste"><svg><use href="#i-caret"/></svg></button></div>
        </div>
        <div class="cols">
          <div>
            <h4>A<u>b</u>stand</h4>
            <div class="grp"><button class="tb" aria-label="Abstand vergrößern"><svg><use href="#i-spinc"/></svg></button><button class="tb" aria-label="Abstand verkleinern"><svg><use href="#i-spdec"/></svg></button></div>
          </div>
          <div>
            <h4>Einzug</h4>
            <div class="grp"><button class="tb" aria-label="Einzug verkleinern"><svg><use href="#i-outdent"/></svg></button><button class="tb" aria-label="Einzug vergrößern"><svg><use href="#i-indent"/></svg></button><button class="tb wide" aria-label="Hängend"><svg><use href="#i-hang"/></svg></button></div>
          </div>
        </div>
        <div class="cols spins">
          <div class="spin"><svg><use href="#i-above"/></svg><span><input type="text" value="0,00 cm" aria-label="Abstand über"><span class="ud"><button aria-label="Mehr"><svg><use href="#i-caret"/></svg></button><button aria-label="Weniger"><svg><use href="#i-caret"/></svg></button></span></span></div>
          <div class="spin"><svg><use href="#i-before"/></svg><span><input type="text" value="0,00 cm" aria-label="Einzug vor"><span class="ud"><button aria-label="Mehr"><svg><use href="#i-caret"/></svg></button><button aria-label="Weniger"><svg><use href="#i-caret"/></svg></button></span></span></div>
          <div class="spin"><svg><use href="#i-below"/></svg><span><input type="text" value="0,00 cm" aria-label="Abstand unter"><span class="ud"><button aria-label="Mehr"><svg><use href="#i-caret"/></svg></button><button aria-label="Weniger"><svg><use href="#i-caret"/></svg></button></span></span></div>
          <div class="spin"><svg><use href="#i-after"/></svg><span><input type="text" value="0,00 cm" aria-label="Einzug nach"><span class="ud"><button aria-label="Mehr"><svg><use href="#i-caret"/></svg></button><button aria-label="Weniger"><svg><use href="#i-caret"/></svg></button></span></span></div>
          <div class="grp"><button class="tb" aria-label="Zeilenabstand"><svg><use href="#i-line"/></svg></button><button class="dd" aria-label="Zeilenabstand Liste"><svg><use href="#i-caret"/></svg></button></div>
          <div class="spin"><svg><use href="#i-first"/></svg><span><input type="text" value="0,00 cm" aria-label="Erstzeileneinzug"><span class="ud"><button aria-label="Mehr"><svg><use href="#i-caret"/></svg></button><button aria-label="Weniger"><svg><use href="#i-caret"/></svg></button></span></span></div>
        </div>
      </section>
      <section class="closed"><h3><button class="fold" aria-label="Seite aufklappen">+</button>Seite<button class="dots" aria-label="Weitere Optionen"></button></h3></section>
    </aside>

    <nav class="tabs">
      <button class="tabmenu" aria-label="Seitenleistenmenü"><svg width="18" height="19"><path d="M0 2h16M0 6h16M0 10h16" stroke="#46545f" stroke-width="2"/><path d="M8 13.500h7l-3.500 4z"/></svg></button>
      <button class="tab on" aria-label="Eigenschaften"><svg><use href="#i-cube"/></svg></button>
      <button class="tab" aria-label="Formatvorlagen"><svg><use href="#i-magic"/></svg></button>
      <button class="tab" aria-label="Gallery"><svg><use href="#i-photo"/></svg></button>
      <button class="tab" aria-label="Navigator"><svg><use href="#i-nav"/></svg></button>
    </nav>
  </div>

  <footer class="status">
    <span class="s-page">Seite 1 / 1</span><span class="s-style">Standard</span><span class="s-lang">Deutsch (Deutschland)</span><span class="s-ins">EINFG</span><span class="s-std">STD</span><span class="s-a"></span><span class="s-b"></span><span class="s-rest"></span>
    <span class="s-view"><button aria-label="Einzelseite"><svg width="10" height="12"><use href="#i-page1"/></svg></button><button aria-label="Mehrere Seiten"><svg width="20" height="12"><use href="#i-page2"/></svg></button><button aria-label="Buchansicht"><svg width="18" height="12"><use href="#i-book"/></svg></button></span>
    <span class="s-zoom"><button aria-label="Verkleinern"><svg width="12" height="12"><circle cx="6" cy="6" r="5" fill="#fff" stroke="#6b7d8b"/><path d="M3 6h6" stroke="#1c3f66" stroke-width="1.500"/></svg></button><input type="range" min="0" max="100" value="49" aria-label="Zoom"><button aria-label="Vergrößern"><svg width="12" height="12"><circle cx="6" cy="6" r="5" fill="#fff" stroke="#6b7d8b"/><path d="M3 6h6M6 3v6" stroke="#1c3f66" stroke-width="1.500"/></svg></button></span>
    <span class="s-pct">100 %</span>
  </footer>
</div>
<script src="ruler.js"></script>
</body>
</html>
```
FILE: ruler.js
```js
const NS = 'http://www.w3.org/2000/svg';
const MARGIN = 76;

function add(svg, name, attrs, text) {
  const node = document.createElementNS(NS, name);
  for (const key in attrs) node.setAttribute(key, attrs[key]);
  if (text !== undefined) node.textContent = text;
  svg.appendChild(node);
}

// Marks every quarter centimetre; whole centimetres carry their number.
function marks(svg, from, to, cm, vertical) {
  for (let q = from; q <= to; q++) {
    const pos = Math.round(MARGIN + (vertical ? 0 : 1) + q * cm / 4);
    if (q === 0) continue;
    if (q % 4 === 0) {
      const label = Math.abs(q / 4);
      if (vertical) add(svg, 'text', { transform: `translate(15 ${pos}) rotate(-90)`, 'text-anchor': 'middle' }, label);
      else add(svg, 'text', { x: pos, y: 14, 'text-anchor': 'middle' }, label);
    } else {
      const len = q % 2 === 0 ? 3 : 1;
      const across = len === 3 ? 8 : 9;
      add(svg, 'rect', vertical
        ? { x: across, y: pos, width: len, height: 1 }
        : { x: pos, y: across, width: 1, height: len });
    }
  }
}

const h = document.getElementById('hruler');
add(h, 'rect', { x: 1, y: 1, width: 794, height: 17, class: 'paper' });
add(h, 'rect', { x: 1.5, y: 0.5, width: 76, height: 17, class: 'edge' });
add(h, 'rect', { x: 720.5, y: 0.5, width: 74, height: 17, class: 'edge' });
marks(h, -7, 75, 37.8, false);
for (let t = 1; t < 14; t++) {
  add(h, 'path', { d: `M${Math.round(77 + t * 47)} 15h1v3h2v1h-5v-1h2z` });
}
add(h, 'path', { d: 'M72.500 .5h10v3l-4 5.500 4 5.500v4h-10v-4l4-5.500-4-5.500z', class: 'marker' });
add(h, 'path', { d: 'M715.500 18.500h10v-3l-5-5-5 5z', class: 'marker' });

const v = document.getElementById('vruler');
add(v, 'rect', { x: 1, y: 75, width: 17, height: '100%', class: 'paper' });
add(v, 'rect', { x: 0.5, y: 0.5, width: 17, height: 75, class: 'edge' });
marks(v, -7, 77, 37.75, true);
```
FILE: styles.css
```css
* { box-sizing: border-box; }
body {
  margin: 0;
  background: #d6d6d6;
  color: #000;
  font: 11px/16px "Noto Sans", "Open Sans", sans-serif;
}
button {
  margin: 0;
  padding: 0;
  border: 0;
  background: none;
  color: inherit;
  font: inherit;
}
h1, h2, h3, h4 { margin: 0; font: inherit; }
svg { display: block; }
u { text-underline-offset: 2px; }
.defs { position: absolute; width: 0; height: 0; }
.symbols { display: none; }

.t-pdf, .t-abc, .t-help, .t-bold, .t-under, .t-color, .t-a, .t-ab, .t-strike, .t-n { font-family: "Open Sans", sans-serif; font-weight: 700; }
.t-pdf { font-size: 6px; fill: #fff; }
.t-abc { font-size: 8px; fill: #24313c; }
.t-help { font-size: 14px; fill: #fff; }
.t-bold { font-size: 16px; fill: #243a4b; }
.t-italic { font: italic 700 17px "Liberation Serif", serif; fill: #34505f; }
.t-under { font-size: 14px; font-weight: 600; fill: #33546b; }
.t-color { font-size: 15px; fill: #2a5674; }
.t-a { font-size: 12px; fill: #234c68; }
.t-grey { fill: #8b9aa5; }
.t-slate { fill: #5c6b76; }
.t-ab { font-size: 8px; fill: #333; }
.t-strike { font-size: 7px; fill: #444; }
.t-n { font-size: 6px; fill: #333; }

.window {
  display: flex;
  flex-direction: column;
  height: 100vh;
  overflow: hidden;
  border: 1px solid #b4b4b4;
  border-radius: 8px;
  background: #efefef;
}
.titlebar {
  display: flex;
  align-items: center;
  height: 30px;
  flex: none;
  padding-left: 10px;
  background: #f3f3f3;
  color: #8f8f8f;
}
.ic16 { width: 16px; height: 16px; }
.titlebar h1 { flex: 1; padding-left: 4px; }
.winbtn { width: 46px; height: 30px; display: grid; place-items: center; }

.menubar {
  display: flex;
  align-items: center;
  gap: 12px;
  height: 23px;
  flex: none;
  padding: 0 8px 0 6px;
  border-bottom: 1px solid #d9d9d9;
  background: #fff;
}
.docclose { margin-left: auto; }

.bars { flex: none; background: #fff; border-bottom: 1px solid #b4b4b4; }
.barrow { display: flex; }
.bar {
  display: flex;
  align-items: center;
  height: 31px;
  padding-left: 4px;
  border-right: 1px solid #c4c4c4;
  border-bottom: 1px solid #c4c4c4;
}
.bar.format { border-bottom-color: #fff; }
.grip {
  width: 2px;
  height: 18px;
  margin-right: 5px;
  background: repeating-linear-gradient(#7c7c7c 0 2px, transparent 2px 4px);
}
.tb { width: 25px; height: 26px; display: grid; place-items: center; flex: none; }
.tb svg { width: 18px; height: 18px; }
.tb.on { background: #cce8ff; border: 1px solid #99d1ff; border-radius: 3px; }
.dd { width: 11px; height: 26px; display: grid; place-items: center; flex: none; }
.dd svg, .more svg, .ud svg { width: 6px; height: 4px; fill: currentColor; }
.dd.off { color: #9a9a9a; }
.sep { width: 1px; height: 16px; margin: 0 4px 0 3px; background: #bdbdbd; }
.more {
  align-self: stretch;
  display: grid;
  justify-items: center;
  align-items: end;
  width: 10px;
  margin: 3px 1px 2px 7px;
  padding-bottom: 4px;
  background: linear-gradient(#f0f0f0, #a0a0a0);
}
.find .more { margin-left: 6px; }
.combos { display: flex; gap: 8px; padding: 0 7px 0 9px; }
.combo {
  display: grid;
  grid-template-columns: 1fr 18px;
  height: 23px;
  padding: 1px;
  border: 1px solid #a8a8b0;
  background: #fff;
}
.combo select, .combo input {
  grid-area: 1 / 1 / 2 / 3;
  width: 100%;
  min-width: 0;
  padding: 0 3px;
  border: 0;
  background: #fff;
  appearance: none;
  color: #000;
  font: inherit;
}
.combo input::placeholder { color: #6d6d6d; opacity: 1; }
.chev {
  grid-area: 1 / 2;
  z-index: 1;
  display: grid;
  place-items: center;
  border: 1px solid #c9c9c9;
  border-radius: 2px;
  background: #fdfdfd;
  pointer-events: none;
}
.chev svg { width: 10px; height: 6px; }
.w100 { width: 100px; }
.w136 { width: 136px; }
.w152 { width: 152px; }
.w61 { width: 61px; }
.w155 { width: 155px; }
.w51 { width: 51px; }

.main { display: flex; flex: 1; min-height: 0; }
.editor {
  display: grid;
  grid-template: 26px minmax(0, 1fr) 18px / 25px minmax(0, 1fr) 18px;
  flex: 1;
  min-width: 0;
  margin-left: 1px;
  border-top: 1px solid #6d6d6d;
  border-left: 1px solid #6d6d6d;
}
.tabtype {
  display: grid;
  place-items: center;
  width: 18px;
  height: 18px;
  margin: 3px 0 0 3px;
  border: 1px solid #a0a0a0;
}
.hruler { display: flex; justify-content: center; overflow: hidden; padding: 3px 0 0 2px; }
.vruler { grid-area: 2 / 1; overflow: hidden; padding: 38px 0 0 3px; }
.hruler svg, .vruler svg { flex: none; font-size: 11px; }
.paper { fill: #fff; }
.edge { fill: #efefef; stroke: #a0a0a0; }
.marker { fill: #efefef; stroke: #777; stroke-width: 1; }
.canvas {
  grid-row: 2;
  display: flex;
  justify-content: center;
  overflow: hidden;
  margin-left: 1px;
  padding-top: 37px;
  border-top: 1px solid #000;
  border-left: 1px solid #000;
  background: #ababab;
  box-shadow: -1px 0 #a0a0a0;
}
.page {
  flex: none;
  width: 796px;
  height: 1125px;
  padding: 76px;
  border: 1px solid #000;
  background: #fff;
}
.textarea { height: 100%; border: 1px solid #c0c0c0; }
.vscroll {
  grid-area: 1 / 3 / 4;
  display: flex;
  flex-direction: column;
  align-items: center;
  gap: 2px;
  padding: 17px 1px 19px 0;
  border-left: 1px solid #fff;
  border-right: 1px solid #e0e0e0;
}
.vthumb { width: 2px; height: 555px; margin-bottom: auto; background: #868686; }
.vscroll button {
  display: grid;
  place-items: center;
  width: 15px;
  height: 15px;
  border: 1px solid #cdcdcd;
  border-radius: 3px;
  background: #fdfdfd;
}
.hscroll { grid-area: 3 / 1 / 4 / 3; padding: 7px 17px 0 16px; border-top: 1px solid #fff; }
.hscroll i { display: block; height: 2px; background: #868686; }

.splitter { display: grid; align-items: center; width: 6px; padding: 0 0 4px 1px; border-top: 1px solid #a0a0a0; }

.sidebar {
  display: flex;
  flex-direction: column;
  flex: none;
  width: 233px;
  padding: 2px 0 3px 3px;
  border: 1px solid #a0a0a0;
  border-right: 0;
}
.deckhead, .sidebar section { border: 1px solid #a0a0a0; border-bottom: 0; }
.deckhead {
  display: flex;
  align-items: center;
  justify-content: space-between;
  height: 27px;
  padding: 1px 4px 0 10px;
  font-weight: 700;
}
.deckhead button { padding-bottom: 4px; }
.sidebar section { padding: 3px 5px 8px 6px; }
.sidebar h3 { display: flex; align-items: center; height: 22px; color: #222; font-size: 12px; font-weight: 700; }
.sidebar section.closed { flex: 1; padding: 0; border-bottom: 1px solid #a0a0a0; }
.sidebar .closed h3 { height: 27px; padding: 2px 5px 0 6px; border-bottom: 1px solid #a0a0a0; }
.fold {
  display: grid;
  place-items: center;
  width: 9px;
  height: 9px;
  margin: 0 5px 2px 0;
  outline: 1px solid #444;
  font: 700 9px/9px "DejaVu Sans", sans-serif;
}
.dots { width: 10px; height: 2px; margin: 0 0 4px auto; background: repeating-linear-gradient(90deg, #333 0 2px, transparent 2px 4px); }
.srow { display: flex; margin-bottom: 5px; }
.fonts { gap: 6px; margin: 3px 0 7px; }
.spread { justify-content: space-between; margin-bottom: 6px; }
.script { gap: 7px; margin-bottom: 1px; }
.push { margin-left: 10px; }
.tight { margin-left: -3px; }
.grp { display: flex; align-items: center; width: max-content; height: 31px; padding-right: 2px; border: 1px solid #c8c8c8; }
.lists { gap: 17px; margin-bottom: 2px; }
.fillbtn { width: 39px; grid-template-columns: 19px 17px; }
.fillbtn svg:last-child { width: 16px; height: 16px; }
.wide { width: 30px; }
.tb.wide svg { width: 22px; }
.sidebar h4 { height: 17px; }
.cols { display: grid; grid-template-columns: 114px 1fr; }
.spins { row-gap: 7px; align-items: center; margin-top: 11px; }
.spin { display: flex; align-items: center; justify-content: space-between; height: 24px; }
.spin:nth-child(odd) { margin-right: 6px; }
.spin > svg { width: 16px; height: 18px; }
.spin > span { display: flex; width: 88px; height: 23px; padding: 1px; border: 1px solid #a8a8b0; background: #fff; }
.spin:nth-child(even) > span { width: 82px; }
.spin input { width: 100%; min-width: 0; padding: 0 1px; border: 0; font: inherit; }
.ud { display: flex; flex-direction: column; width: 16px; flex: none; }
.ud button { flex: 1; display: grid; place-items: center; border: 1px solid #adadad; background: #f0f0f0; }
.ud button:first-child svg { rotate: 180deg; }

.tabs {
  display: flex;
  flex-direction: column;
  align-items: center;
  width: 39px;
  flex: none;
  gap: 4px;
  margin-right: 1px;
  padding: 9px 0 0 2px;
  border: 1px solid #a0a0a0;
  border-left: 0;
}
.tabmenu { display: grid; justify-items: center; width: 23px; height: 28px; border-bottom: 1px solid #a0a0a0; }
.tab { display: grid; place-items: center; width: 31px; height: 31px; }
.tab svg { width: 26px; height: 26px; }
.tab.on { border: 1px solid #a8a8a8; border-radius: 4px; }

.status { display: flex; align-items: center; height: 22px; flex: none; padding-top: 1px; border-top: 1px solid #fff; }
.status > span { display: flex; align-items: center; height: 16px; padding-left: 5px; border-left: 1px solid #a0a0a0; white-space: nowrap; }
.status .s-page { width: 350px; padding-left: 10px; border-left: 0; }
.s-style { width: 342px; }
.status .s-lang { width: 415px; justify-content: center; padding-left: 0; }
.s-ins { width: 45px; }
.s-std { width: 33px; }
.s-a { width: 16px; }
.s-b { width: 29px; }
.s-rest { flex: 1; }
.status .s-view { width: 76px; gap: 6px; padding-left: 6px; }
.status .s-zoom { width: 143px; gap: 5px; padding-left: 4px; }
.s-pct { width: 45px; }
.s-zoom input {
  width: 97px;
  height: 12px;
  margin: 0;
  appearance: none;
  background: linear-gradient(#888, #888) 30px 1px / 1px 10px no-repeat, linear-gradient(#888, #888) 0 5px / 100% 1px no-repeat, linear-gradient(#888, #888) 0 7px / 100% 1px no-repeat;
}
.s-zoom input::-webkit-slider-thumb { appearance: none; width: 9px; height: 9px; border: 1px solid #5e7fae; border-radius: 50%; background: #a9c4ee; }
```
